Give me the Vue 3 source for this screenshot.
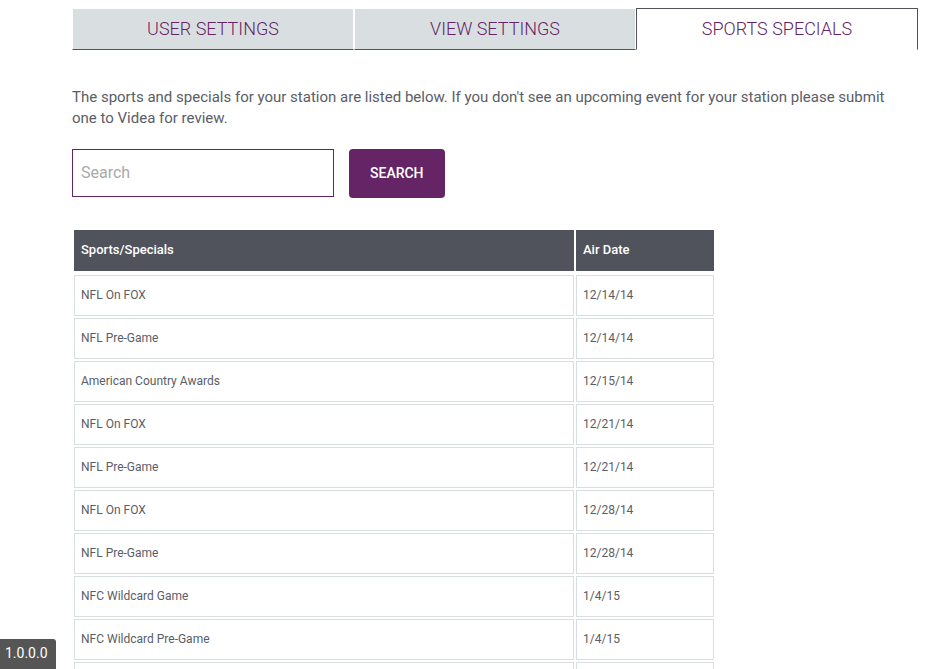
<script setup>
import { ref } from 'vue'

const tabs = ['User Settings', 'View Settings', 'Sports Specials']
const active = ref('Sports Specials')
const query = ref('')
const events = [
  { name: 'NFL On FOX', date: '12/14/14' },
  { name: 'NFL Pre-Game', date: '12/14/14' },
  { name: 'American Country Awards', date: '12/15/14' },
  { name: 'NFL On FOX', date: '12/21/14' },
  { name: 'NFL Pre-Game', date: '12/21/14' },
  { name: 'NFL On FOX', date: '12/28/14' },
  { name: 'NFL Pre-Game', date: '12/28/14' },
  { name: 'NFC Wildcard Game', date: '1/4/15' },
  { name: 'NFC Wildcard Pre-Game', date: '1/4/15' },
  { name: '', date: '' }
]
</script>

<template>
  <div class="page">
    <nav class="tabs">
      <button
        v-for="tab in tabs"
        :key="tab"
        type="button"
        class="tab"
        :class="{ active: tab === active }"
        @click="active = tab"
      >{{ tab }}</button>
    </nav>
    <main class="content">
      <p class="intro">
        The sports and specials for your station are listed below. If you don't see an upcoming event for your station please submit one to Videa for review.
      </p>
      <form class="search" @submit.prevent>
        <input v-model="query" class="field" type="text" placeholder="Search" aria-label="Search" />
        <button class="submit" type="submit">SEARCH</button>
      </form>
      <table class="events">
        <thead>
          <tr>
            <th class="name" scope="col">Sports/Specials</th>
            <th scope="col">Air Date</th>
          </tr>
        </thead>
        <tbody>
          <tr v-for="(event, i) in events" :key="i">
            <td>{{ event.name }}</td>
            <td>{{ event.date }}</td>
          </tr>
        </tbody>
      </table>
    </main>
    <div class="version">1.0.0.0</div>
  </div>
</template>

<style>
body {
  margin: 0;
  background: #fff;
}
</style>

<style scoped>
.page {
  box-sizing: border-box;
  height: 100vh;
  overflow: hidden;
  padding: 8px 17px 0 72px;
  font-family: Roboto, "Liberation Sans", sans-serif;
  color: #5a5d66;
}
.tabs {
  display: flex;
}
.tab {
  flex: 1;
  box-sizing: border-box;
  height: 42px;
  margin: 0;
  padding: 0;
  border: 1px solid #fff;
  border-bottom-color: #50535c;
  background: #d9dfe1;
  font: 300 18px/24px Roboto, "Liberation Sans", sans-serif;
  text-transform: uppercase;
  color: #652465;
}
.tab.active {
  border-color: #50535c;
  border-bottom-color: #fff;
  background: #fff;
}
.content {
  padding-top: 37px;
}
.intro {
  margin: 0;
  padding-right: 20px;
  font-size: 15px;
  line-height: 21px;
}
.search {
  display: flex;
  align-items: flex-start;
  gap: 15px;
  margin: 20px 0 30px;
}
.field {
  box-sizing: border-box;
  width: 262px;
  height: 48px;
  padding: 0 8px 2px;
  border: 1px solid #652465;
  border-radius: 0;
  font: 400 16px/20px Roboto, "Liberation Sans", sans-serif;
  color: #50535c;
}
.field::placeholder {
  color: #a9a9a9;
}
.submit {
  height: 49px;
  padding: 0 21px 2px;
  border: 0;
  border-radius: 4px;
  background: #652465;
  font: 500 14px/20px Roboto, "Liberation Sans", sans-serif;
  color: #fff;
}
.events {
  table-layout: fixed;
  width: 644px;
  border-collapse: separate;
  border-spacing: 2px;
  font-size: 12px;
  line-height: 15px;
}
.name {
  width: 500px;
}
th,
td {
  box-sizing: border-box;
  text-align: left;
  vertical-align: middle;
}
th {
  height: 43px;
  padding: 0 7px 2px;
  border-bottom: 2px solid #fff;
  background: #50535c;
  font-size: 13px;
  font-weight: 500;
  color: #fff;
}
td {
  height: 41px;
  padding: 0 6px;
  border: 1px solid #d9dfe1;
}
.version {
  position: fixed;
  left: 0;
  bottom: 0;
  padding: 4px 8px 6px 5px;
  border-top-right-radius: 3px;
  background: #555;
  font-size: 14px;
  line-height: 20px;
  color: #fff;
}
</style>
